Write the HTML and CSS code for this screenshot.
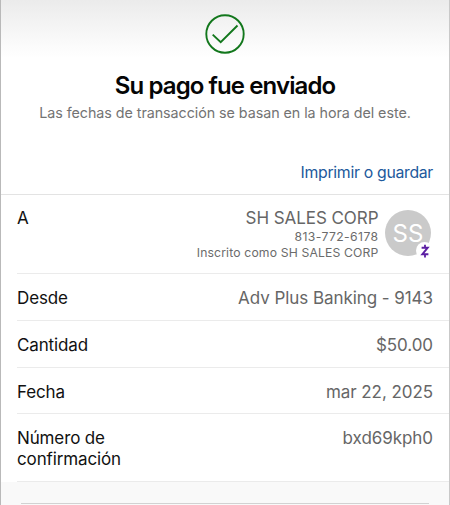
FILE: index.html
```html
<!DOCTYPE html>
<html lang="es">
<head>
    <meta charset="UTF-8">
    <meta name="viewport" content="width=device-width, initial-scale=1.0">
    <title>Su pago fue enviado</title>
    <link rel="stylesheet" href="styles.css">
</head>
<body>
    <main class="screen">
        <header class="header">
            <svg class="check-icon" viewBox="0 0 40 40" fill="none" stroke="#12771c" stroke-width="1.9">
                <circle cx="20" cy="20" r="18.7"/>
                <path d="M7.7 20.6l8 7.6 16.8-16.7"/>
            </svg>
            <h1 class="title">Su pago fue enviado</h1>
            <p class="subtitle">Las fechas de transacción se basan en la hora del este.</p>
            <a class="print-link">Imprimir o guardar</a>
        </header>

        <!-- Detalles del pago -->
        <section class="details">
            <div class="row row-recipient">
                <span class="label">A</span>
                <div class="recipient">
                    <div class="recipient-info">
                        <span class="value">SH SALES CORP</span>
                        <span class="small phone">813-772-6178</span>
                        <span class="small">Inscrito como SH SALES CORP</span>
                    </div>
                    <div class="avatar">
                        <span class="initials">SS</span>
                        <span class="zelle-badge">
                            <svg class="zelle-icon" viewBox="0 0 10 14" fill="none" stroke="#5c1fa3">
                                <path d="M1.6 3.8H7.6L2.4 10.2h6" stroke-width="2"/>
                                <path d="M5 .7v3M5 10.4v3" stroke-width="1.8"/>
                            </svg>
                        </span>
                    </div>
                </div>
            </div>
            <div class="row">
                <span class="label">Desde</span>
                <span class="value">Adv Plus Banking - 9143</span>
            </div>
            <div class="row">
                <span class="label">Cantidad</span>
                <span class="value">$50.00</span>
            </div>
            <div class="row row-date">
                <span class="label">Fecha</span>
                <span class="value">mar 22, 2025</span>
            </div>
            <div class="row row-confirmation">
                <span class="label">Número de<br>confirmación</span>
                <span class="value">bxd69kph0</span>
            </div>
        </section>

        <footer class="footer"></footer>
    </main>
</body>
</html>
```
FILE: styles.css
```css
body {
    margin: 0;
    font-family: Inter, "Liberation Sans", sans-serif;
    background-color: #fff;
    color: #111;
}

.screen {
    box-sizing: border-box;
    height: 505px;
    display: flex;
    flex-direction: column;
    overflow: hidden;
    border-left: 1px solid #b9b9b9;
    border-right: 1px solid #c9c9c9;
}

.header {
    box-sizing: border-box;
    height: 195px;
    padding: 14px 16px 0;
    display: flex;
    flex-direction: column;
    align-items: center;
    background: linear-gradient(#ebebeb, #f4f4f4 25px, #fff 58px);
    border-bottom: 1px solid #e3e3e3;
}

.check-icon {
    width: 40px;
    height: 40px;
}

.title {
    margin: 17px 0 0;
    font-size: 24px;
    line-height: 30px;
    font-weight: 600;
    letter-spacing: -0.9px;
    color: #050505;
    white-space: nowrap;
}

.subtitle {
    margin: 2px 0 0;
    font-size: 14.3px;
    line-height: 20px;
    letter-spacing: -0.05px;
    color: #737373;
    white-space: nowrap;
}

.print-link {
    align-self: flex-end;
    margin-top: 39px;
    font-size: 15.8px;
    line-height: 22px;
    letter-spacing: -0.3px;
    color: #21599c;
}

.details {
    padding-left: 16px;
}

.row {
    box-sizing: border-box;
    height: 47px;
    padding: 14px 16px 0 0;
    display: flex;
    justify-content: space-between;
    border-bottom: 1px solid #ebebeb;
}

.row-recipient {
    height: 79px;
    padding: 13px 18px 0 0;
}

.row-date {
    height: 46px;
}

.row-confirmation {
    height: 68px;
}

.label,
.value {
    font-size: 17px;
    line-height: 21px;
    letter-spacing: -0.13px;
    white-space: nowrap;
}

.value {
    letter-spacing: -0.06px;
    color: #666;
}

.recipient {
    display: flex;
    gap: 6.5px;
}

.recipient-info {
    display: flex;
    flex-direction: column;
    align-items: flex-end;
}

.small {
    font-size: 12.2px;
    line-height: 16px;
    letter-spacing: 0.15px;
    color: #6b6b6b;
}

.phone {
    letter-spacing: 0.4px;
}

.avatar {
    position: relative;
    width: 46px;
    height: 46px;
    margin-top: 2px;
    border-radius: 50%;
    background-color: #cacaca;
    text-align: center;
}

.initials {
    font-size: 24px;
    line-height: 47px;
    color: #fff;
}

.zelle-badge {
    position: absolute;
    right: -2px;
    bottom: -3px;
    width: 17px;
    height: 17px;
    display: flex;
    align-items: center;
    justify-content: center;
    border-radius: 50%;
    background-color: #fff;
}

.zelle-icon {
    width: 10px;
    height: 14px;
}

.footer {
    flex: 1;
    padding: 21px 20px 0;
    background-color: #f9f9f9;
}

.footer::before {
    content: "";
    display: block;
    height: 1px;
    background-color: #d2d2d2;
}
```
